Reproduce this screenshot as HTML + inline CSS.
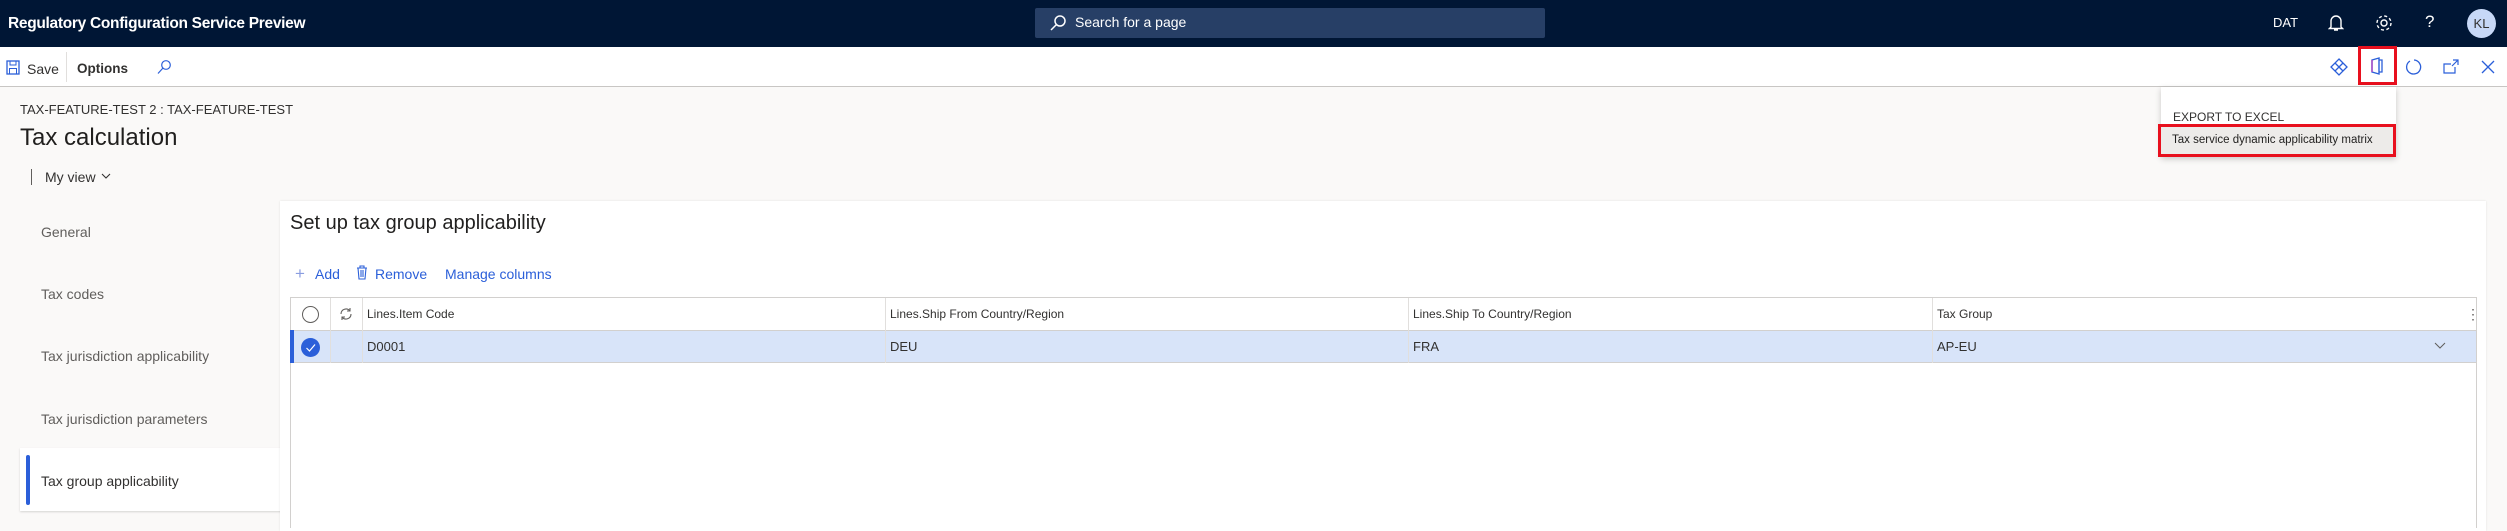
<!DOCTYPE html>
<html><head><meta charset="utf-8"><style>
*{box-sizing:border-box;margin:0;padding:0}
body{width:2507px;height:528px;overflow:hidden;background:#faf9f8;font-family:"Liberation Sans",sans-serif;color:#323130;position:relative}
.a{position:absolute;white-space:nowrap}
.hdr{left:0;top:0;width:2507px;height:47px;background:#001635}
.tb{left:0;top:47px;width:2507px;height:40px;background:#fff;border-bottom:1px solid #c8c6c4}
.blue{color:#2b5fd9}
.nav{font-size:14px;color:#605e5c;left:41px}
.th{font-size:12px;color:#323130;top:298px;height:32px;line-height:32px}
.td{font-size:13px;top:330px;height:33px;line-height:33px}
.vl{width:1px;background:#e1dfdd}
</style></head><body>
<div class="a hdr"></div>
<div class="a" style="left:8px;top:15px;font-size:15.5px;font-weight:bold;color:#fff;letter-spacing:-0.3px">Regulatory Configuration Service Preview</div>
<div class="a" style="left:1035px;top:8px;width:510px;height:30px;background:#273f66;border-radius:2px"></div>
<svg class="a" style="left:1049px;top:14px" width="18" height="18" viewBox="0 0 18 18"><circle cx="11" cy="7" r="5" fill="none" stroke="#fff" stroke-width="1.5"/><path d="M7.5 10.5L2 16" stroke="#fff" stroke-width="1.5"/></svg>
<div class="a" style="left:1075px;top:14px;font-size:14px;color:#fff">Search for a page</div>
<div class="a" style="left:2273px;top:15px;font-size:13px;color:#fff">DAT</div>
<svg class="a" style="left:2328px;top:13px" width="16" height="20" viewBox="0 0 16 20"><path d="M3 14V8a5 5 0 0110 0v6l1.5 1.5h-13z M6 17h4" fill="none" stroke="#fff" stroke-width="1.4"/></svg>
<svg class="a" style="left:2374px;top:13px" width="20" height="20" viewBox="0 0 20 20"><circle cx="10" cy="10" r="3" fill="none" stroke="#fff" stroke-width="1.4"/><circle cx="10" cy="10" r="7" fill="none" stroke="#fff" stroke-width="1.4" stroke-dasharray="3 2.5"/></svg>
<div class="a" style="left:2425px;top:12px;font-size:17px;color:#fff">?</div>
<div class="a" style="left:2467px;top:9px;width:29px;height:29px;border-radius:50%;background:#c7d8f7;color:#323130;font-size:13px;text-align:center;line-height:29px">KL</div>

<div class="a tb"></div>
<svg class="a" style="left:6px;top:60px" width="14" height="15" viewBox="0 0 14 15"><rect x="1" y="1" width="12" height="13" fill="none" stroke="#2b5fd9" stroke-width="1.3"/><rect x="4" y="1" width="6" height="4" fill="none" stroke="#2b5fd9"/><rect x="3.5" y="8.5" width="7" height="5.5" fill="none" stroke="#2b5fd9"/></svg>
<div class="a" style="left:27px;top:61px;font-size:14px">Save</div>
<div class="a vl" style="left:66px;top:52px;height:30px;background:#e1dfdd"></div>
<div class="a" style="left:77px;top:61px;font-size:13.5px;font-weight:bold;color:#323130">Options</div>
<svg class="a" style="left:156px;top:59px" width="16" height="16" viewBox="0 0 16 16"><circle cx="10" cy="6" r="4.3" fill="none" stroke="#2b5fd9" stroke-width="1.2"/><path d="M7 9L2 14.5" stroke="#2b5fd9" stroke-width="1.2"/></svg>
<svg class="a" style="left:2330px;top:58px" width="18" height="18" viewBox="0 0 18 18"><path d="M9 1L17 9L9 17L1 9Z M5 5L13 13 M13 5L5 13" fill="none" stroke="#2b5fd9" stroke-width="1.3"/></svg>
<div class="a" style="left:2358px;top:46px;width:39px;height:39px;border:3px solid #e8101e"></div>
<svg class="a" style="left:2370px;top:57px" width="14" height="18" viewBox="0 0 14 18"><path d="M2 3L9 1V17L2 15Z" fill="none" stroke="#2b5fd9" stroke-width="1.4"/><path d="M9 3H12V15H9" fill="none" stroke="#2b5fd9" stroke-width="1.3"/><path d="M2 3V15" stroke="#b146c2" stroke-width="1.4"/></svg>
<svg class="a" style="left:2405px;top:58px" width="18" height="18" viewBox="0 0 18 18"><path d="M5 3A7 7 0 1 0 9 2" fill="none" stroke="#2b5fd9" stroke-width="1.3"/></svg>
<svg class="a" style="left:2442px;top:58px" width="18" height="18" viewBox="0 0 18 18"><path d="M13 9V15H2V6H9 M11 2H16V7 M16 2L10 8" fill="none" stroke="#2b5fd9" stroke-width="1.2"/></svg>
<svg class="a" style="left:2481px;top:60px" width="14" height="14" viewBox="0 0 14 14"><path d="M1 1L13 13M13 1L1 13" stroke="#2b5fd9" stroke-width="1.3"/></svg>

<div class="a" style="left:20px;top:102px;font-size:13px;color:#323130">TAX-FEATURE-TEST 2 : TAX-FEATURE-TEST</div>
<div class="a" style="left:20px;top:124px;font-size:24px;color:#201f1e">Tax calculation</div>
<div class="a" style="left:31px;top:169px;width:1px;height:16px;background:#605e5c"></div>
<div class="a" style="left:45px;top:169px;font-size:14px">My view</div>
<svg class="a" style="left:101px;top:172px" width="10" height="8" viewBox="0 0 10 8"><path d="M1 2L5 6L9 2" fill="none" stroke="#323130" stroke-width="1.1"/></svg>

<div class="a nav" style="top:224px">General</div>
<div class="a nav" style="top:286px">Tax codes</div>
<div class="a nav" style="top:348px">Tax jurisdiction applicability</div>
<div class="a nav" style="top:411px">Tax jurisdiction parameters</div>
<div class="a" style="left:20px;top:448px;width:262px;height:63px;background:#fff;box-shadow:0 1px 2px rgba(0,0,0,.15)"></div>
<div class="a" style="left:26px;top:455px;width:4px;height:50px;background:#2b5fd9;border-radius:2px"></div>
<div class="a nav" style="top:473px;color:#323130">Tax group applicability</div>

<div class="a" style="left:280px;top:201px;width:2206px;height:330px;background:#fff;box-shadow:0 0 2px rgba(0,0,0,.1)"></div>
<div class="a" style="left:290px;top:212px;font-size:20px;color:#201f1e">Set up tax group applicability</div>
<div class="a blue" style="left:295px;top:264px;font-size:17px;color:#8a9de0">+</div>
<div class="a blue" style="left:315px;top:266px;font-size:14px">Add</div>
<svg class="a" style="left:356px;top:265px" width="12" height="15" viewBox="0 0 12 15"><path d="M1 3H11 M4 3V1H8V3 M2 3L3 14H9L10 3 M5 5V12 M7 5V12" fill="none" stroke="#2b5fd9" stroke-width="1.1"/></svg>
<div class="a blue" style="left:375px;top:266px;font-size:14px">Remove</div>
<div class="a blue" style="left:445px;top:266px;font-size:14px">Manage columns</div>

<div class="a" style="left:290px;top:297px;width:2187px;height:231px;border:1px solid #d2d0ce;border-bottom:none"></div>
<div class="a" style="left:291px;top:330px;width:2185px;height:33px;background:#d8e4f9;border-bottom:1px solid #d2d0ce;border-top:1px solid #d2d0ce"></div>
<div class="a" style="left:290px;top:330px;width:4px;height:33px;background:#2b5fd9"></div>
<div class="a vl" style="left:330px;top:298px;height:65px"></div>
<div class="a vl" style="left:362px;top:298px;height:65px"></div>
<div class="a vl" style="left:885px;top:298px;height:65px"></div>
<div class="a vl" style="left:1408px;top:298px;height:65px"></div>
<div class="a vl" style="left:1932px;top:298px;height:65px"></div>
<div class="a" style="left:302px;top:306px;width:17px;height:17px;border:1px solid #605e5c;border-radius:50%"></div>
<svg class="a" style="left:338px;top:306px" width="16" height="16" viewBox="0 0 16 16"><path d="M3 8A5 5 0 0 1 12 5 M13 8A5 5 0 0 1 4 11 M12 2V5H9 M4 14V11H7" fill="none" stroke="#605e5c" stroke-width="1.1"/></svg>
<div class="a" style="left:301px;top:338px;width:19px;height:19px;border-radius:50%;background:#2b5fd9"></div>
<svg class="a" style="left:301px;top:338px" width="19" height="19" viewBox="0 0 19 19"><path d="M5.5 10L8.5 13L14 6.5" fill="none" stroke="#fff" stroke-width="1.2"/></svg>
<div class="a th" style="left:367px">Lines.Item Code</div>
<div class="a th" style="left:890px">Lines.Ship From Country/Region</div>
<div class="a th" style="left:1413px">Lines.Ship To Country/Region</div>
<div class="a th" style="left:1937px">Tax Group</div>
<div class="a th" style="left:2466px;font-size:14px;color:#605e5c">⋮</div>
<div class="a td" style="left:367px">D0001</div>
<div class="a td" style="left:890px">DEU</div>
<div class="a td" style="left:1413px">FRA</div>
<div class="a td" style="left:1937px">AP-EU</div>
<svg class="a" style="left:2434px;top:342px" width="12" height="8" viewBox="0 0 12 8"><path d="M1 1L6 6L11 1" fill="none" stroke="#605e5c" stroke-width="1"/></svg>

<div class="a" style="left:2161px;top:87px;width:235px;height:70px;background:#fff;box-shadow:0 2px 6px rgba(0,0,0,.2)"></div>
<div class="a" style="left:2173px;top:110px;font-size:12px;color:#323130">EXPORT TO EXCEL</div>
<div class="a" style="left:2158px;top:124px;width:238px;height:33px;border:3px solid #e8101e;background:#edebe9"></div>
<div class="a" style="left:2172px;top:134px;font-size:11.5px;color:#201f1e">Tax service dynamic applicability matrix</div>
</body></html>
